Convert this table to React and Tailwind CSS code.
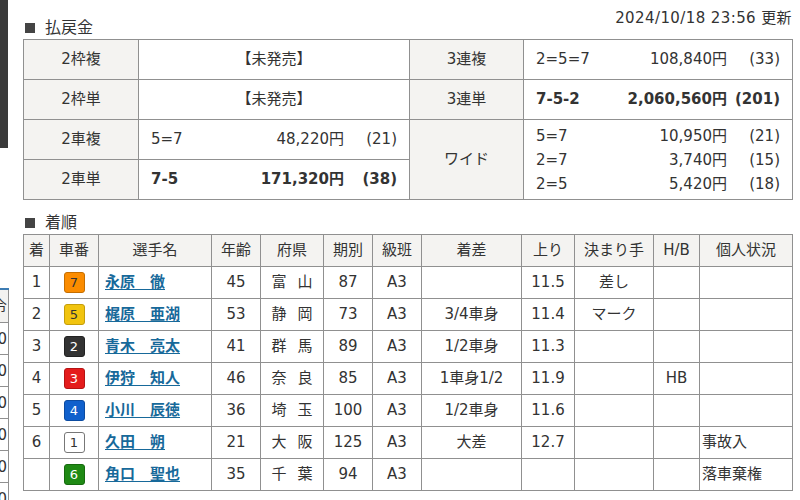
import React from "react"

const font = "font-['DejaVu_Sans','Noto_Sans_CJK_JP',sans-serif]"

const payout = [
    {label: "2枠複", label2: "3連複", rows2: [["2=5=7", "108,840円", "(33)"]]},
    {label: "2枠単", label2: "3連単", bold2: true, rows2: [["7-5-2", "2,060,560円", "(201)"]]},
]

const badgeColors = {
    1: "bg-white border-[#777] text-[#333]",
    2: "bg-[#333] border-[#222] text-white",
    3: "bg-[#e41c1c] border-[#b51313] text-white",
    4: "bg-[#1060cc] border-[#0c4ba0] text-white",
    5: "bg-[#f1c40f] border-[#c49d0a] text-[#333]",
    6: "bg-[#1f8a14] border-[#166a0e] text-white",
    7: "bg-[#fb8c00] border-[#c56e00] text-[#333]",
}

const results = [
    ["1", 7, "永原　徹", "45", "富山", "87", "A3", "", "11.5", "差し", "", ""],
    ["2", 5, "梶原　亜湖", "53", "静岡", "73", "A3", "3/4車身", "11.4", "マーク", "", ""],
    ["3", 2, "青木　亮太", "41", "群馬", "89", "A3", "1/2車身", "11.3", "", "", ""],
    ["4", 3, "伊狩　知人", "46", "奈良", "85", "A3", "1車身1/2", "11.9", "", "HB", ""],
    ["5", 4, "小川　辰徳", "36", "埼玉", "100", "A3", "1/2車身", "11.6", "", "", ""],
    ["6", 1, "久田　朔", "21", "大阪", "125", "A3", "大差", "12.7", "", "", "事故入"],
    ["", 6, "角口　聖也", "35", "千葉", "94", "A3", "", "", "", "", "落車棄権"],
]

const widths = ["w-[26px]", "w-[49px]", "w-[113px]", "w-[49px]", "w-[63px]", "w-[49px]", "w-[49px]", "w-[100px]", "w-[53px]", "w-[79px]", "w-[46px]", "w-[93px]"]
const heads = ["着", "車番", "選手名", "年齢", "府県", "期別", "級班", "着差", "上り", "決まり手", "H/B", "個人状況"]

const Line = ({combo, amount, pop, bold}) => (
    <div className={`flex px-3 ${bold ? "font-bold" : ""}`}>
        <span className="flex-1">{combo}</span>
        <span>{amount}</span>
        <span className="w-[53px] text-right">{pop}</span>
    </div>
)

const Title = ({children}) => (
    <div className="flex items-center h-[20px] pl-[2px]">
        <span className="inline-block w-[10px] h-[10px] bg-[#444] mr-[10px]"></span>
        <span className="text-[16px]">{children}</span>
    </div>
)

const App = () => {
    const label = "bg-[#f4f3f1] border border-[#909090] text-center"
    const cell = "border border-[#909090]"

    return (
        <div className={`flex w-[800px] h-[500px] overflow-hidden bg-white text-[#333] text-[15px] ${font}`}>
            {/* clipped column on the left */}
            <div className="w-[9px] shrink-0 overflow-hidden">
                <div className="w-[8px] h-[148px] bg-[#3a3a3a]"></div>
                <div className="ml-[-52px] w-[61px] mt-[140px] border-t-2 border-[#3d7cb3]">
                    <div className="h-[33px] bg-[#f3f2f0] border-r border-b border-[#909090] text-right pr-[1px] leading-[33px]">令</div>
                    {[0, 1, 2, 3, 4, 5].map((i) => (
                        <div key={i} className="h-[32px] border-r border-b border-[#909090] text-right pr-[1px] leading-[32px]">0</div>
                    ))}
                </div>
            </div>

            <div className="ml-[14px] w-[769px] pt-[8px]">
                {/* payout header */}
                <div className="flex justify-between items-start">
                    <div className="mt-[10px]"><Title>払戻金</Title></div>
                    <div className="leading-[20px] text-[15px] tracking-[0.4px]">2024/10/18 23:56 更新</div>
                </div>

                <table className="mt-[1px] w-[769px] table-fixed border-collapse">
                    <colgroup>
                        <col className="w-[115px]" />
                        <col className="w-[271px]" />
                        <col className="w-[114px]" />
                        <col className="w-[269px]" />
                    </colgroup>
                    <tbody>
                        {payout.map((p) => (
                            <tr key={p.label} className="h-[40px]">
                                <td className={label}>{p.label}</td>
                                <td className={`${cell} text-center`}>【未発売】</td>
                                <td className={label}>{p.label2}</td>
                                <td className={cell}>
                                    {p.rows2.map((r) => (
                                        <Line key={r[0]} combo={r[0]} amount={r[1]} pop={r[2]} bold={p.bold2} />
                                    ))}
                                </td>
                            </tr>
                        ))}
                        <tr className="h-[40px]">
                            <td className={label}>2車複</td>
                            <td className={cell}><Line combo="5=7" amount="48,220円" pop="(21)" /></td>
                            <td className={label} rowSpan={2}>ワイド</td>
                            <td className={`${cell} leading-[24px]`} rowSpan={2}>
                                <Line combo="5=7" amount="10,950円" pop="(21)" />
                                <Line combo="2=7" amount="3,740円" pop="(15)" />
                                <Line combo="2=5" amount="5,420円" pop="(18)" />
                            </td>
                        </tr>
                        <tr className="h-[40px]">
                            <td className={label}>2車単</td>
                            <td className={cell}><Line combo="7-5" amount="171,320円" pop="(38)" bold /></td>
                        </tr>
                    </tbody>
                </table>

                {/* finishing order */}
                <div className="mt-[13px]"><Title>着順</Title></div>

                <table className="mt-[1px] w-[769px] table-fixed border-collapse">
                    <colgroup>
                        {widths.map((w, i) => <col key={i} className={w} />)}
                    </colgroup>
                    <thead>
                        <tr className="h-[32px]">
                            {heads.map((h) => (
                                <th key={h} className="bg-[#f4f3f1] border border-[#909090] font-normal text-center">{h}</th>
                            ))}
                        </tr>
                    </thead>
                    <tbody>
                        {results.map((r, i) => (
                            <tr key={i} className="h-[32px]">
                                <td className={`${cell} text-center`}>{r[0]}</td>
                                <td className={`${cell} text-center`}>
                                    <span className={`inline-flex items-center justify-center w-[21px] h-[21px] rounded-[3px] border text-[13px] align-middle ${badgeColors[r[1]]}`}>
                                        {r[1]}
                                    </span>
                                </td>
                                <td className={`${cell} pl-[6px]`}>
                                    <a className="font-bold text-[#17699a] underline underline-offset-2">{r[2]}</a>
                                </td>
                                <td className={`${cell} text-center`}>{r[3]}</td>
                                <td className={cell}>
                                    <div className="flex justify-center gap-[11px]">
                                        <span>{r[4][0]}</span>
                                        <span>{r[4][1]}</span>
                                    </div>
                                </td>
                                <td className={`${cell} text-center`}>{r[5]}</td>
                                <td className={`${cell} text-center`}>{r[6]}</td>
                                <td className={`${cell} text-center`}>{r[7]}</td>
                                <td className={`${cell} text-center`}>{r[8]}</td>
                                <td className={`${cell} text-center`}>{r[9]}</td>
                                <td className={`${cell} text-center`}>{r[10]}</td>
                                <td className={`${cell} pl-[2px]`}>{r[11]}</td>
                            </tr>
                        ))}
                    </tbody>
                </table>
            </div>
        </div>
    )
}

export default App
